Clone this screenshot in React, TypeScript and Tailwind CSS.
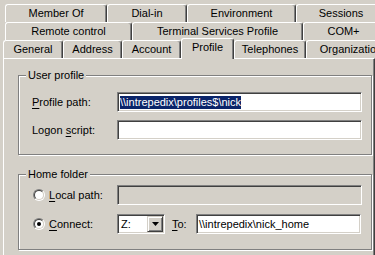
import React from 'react';

type TabDef = { label: string; w: string; selected?: boolean };

const row1: TabDef[] = [
  { label: 'Member Of', w: 'w-[102px]' },
  { label: 'Dial-in', w: 'w-[80px]' },
  { label: 'Environment', w: 'w-[109px]' },
  { label: 'Sessions', w: 'w-[90px]' },
];

const row2: TabDef[] = [
  { label: 'Remote control', w: 'w-[127px]' },
  { label: 'Terminal Services Profile', w: 'w-[171px]' },
  { label: 'COM+', w: 'w-[81px]' },
];

const row3: TabDef[] = [
  { label: 'General', w: 'w-[60px]' },
  { label: 'Address', w: 'w-[59px]' },
  { label: 'Account', w: 'w-[59px]' },
  { label: 'Profile', w: 'w-[53px]', selected: true },
  { label: 'Telephones', w: 'w-[72px]' },
  { label: 'Organization', w: 'w-[90px]' },
];

// classic raised tab: white top/left, dark + gray on the right
const Tab: React.FC<{ tab: TabDef }> = ({ tab }) => (
  <div
    className={`${tab.w} shrink-0 flex items-center justify-center whitespace-nowrap border-l border-t border-white border-r border-r-[#404040] rounded-t-[3px] shadow-[inset_-1px_0_0_#808080] ${
      tab.selected ? 'relative z-10 h-[21px] -mt-[2px] pb-[3px] bg-[#d4d0c8]' : 'h-[18px]'
    }`}
  >
    {tab.label}
  </div>
);

const TabRow: React.FC<{ tabs: TabDef[]; className: string }> = ({ tabs, className }) => (
  <div className={`flex h-[18px] ${className}`}>
    {tabs.map(t => (
      <Tab key={t.label} tab={t} />
    ))}
  </div>
);

// etched group box with caption sitting on the top line
const GroupBox: React.FC<{ title: string; className: string; children: React.ReactNode }> = ({ title, className, children }) => (
  <div className={`relative w-[354px] border border-[#808080] shadow-[1px_1px_0_#fff,inset_1px_1px_0_#fff] ${className}`}>
    <span className="absolute left-[7px] -top-[8px] px-[2px] bg-[#d4d0c8] leading-[14px]">{title}</span>
    {children}
  </div>
);

// sunken edit box
const Edit: React.FC<{ className: string; disabled?: boolean; children?: React.ReactNode }> = ({ className, disabled, children }) => (
  <div
    className={`h-[20px] flex items-center pl-[2px] border border-t-[#808080] border-l-[#808080] border-b-white border-r-white shadow-[inset_1px_1px_0_#404040,inset_-1px_-1px_0_#d4d0c8] ${
      disabled ? 'bg-[#d4d0c8]' : 'bg-white'
    } ${className}`}
  >
    {children}
  </div>
);

const Radio: React.FC<{ checked?: boolean }> = ({ checked }) => (
  <div className="w-[12px] h-[12px] shrink-0 rounded-full border border-t-[#808080] border-l-[#808080] border-b-white border-r-white">
    <div className="w-full h-full rounded-full border border-t-[#404040] border-l-[#404040] border-b-[#d4d0c8] border-r-[#d4d0c8] bg-white flex items-center justify-center">
      {checked && <div className="w-[4px] h-[4px] rounded-full bg-black" />}
    </div>
  </div>
);

const Key: React.FC<{ children: React.ReactNode }> = ({ children }) => (
  <span className="underline underline-offset-[2px]">{children}</span>
);

export default function App() {
  return (
    <div className="w-[375px] h-[255px] overflow-hidden bg-[#d4d0c8] pt-[4px] text-black text-[11px] leading-none font-['Liberation_Sans',Arial,sans-serif]">
      {/* tab strip, back rows first */}
      <TabRow tabs={row1} className="pl-[5px]" />
      <TabRow tabs={row2} className="pl-[5px]" />
      <TabRow tabs={row3} className="pl-[3px]" />

      {/* Profile page */}
      <div className="ml-[3px] w-[372px] h-[197px] border-l border-t border-white border-r border-r-[#404040] shadow-[inset_-1px_0_0_#808080] pl-[14px] pt-[16px]">
        <GroupBox title="User profile" className="h-[80px]">
          <div className="flex flex-col gap-[8px] pt-[16px] pl-[13px]">
            <div className="flex items-center">
              <span className="w-[85px]">
                <Key>P</Key>rofile path:
              </span>
              <Edit className="w-[245px]">
                <span className="bg-[#0a246a] text-white leading-[13px]">{'\\\\intrepedix\\profiles$\\nick'}</span>
              </Edit>
            </div>
            <div className="flex items-center">
              <span className="w-[85px]">
                Logon <Key>s</Key>cript:
              </span>
              <Edit className="w-[245px]" />
            </div>
          </div>
        </GroupBox>

        <GroupBox title="Home folder" className="h-[76px] mt-[19px]">
          <div className="flex flex-col gap-[9px] pt-[10px] pl-[14px]">
            <div className="flex items-center">
              <Radio />
              <span className="w-[72px] pl-[4px]">
                <Key>L</Key>ocal path:
              </span>
              <Edit className="w-[245px]" disabled />
            </div>
            <div className="flex items-center">
              <Radio checked />
              <span className="w-[72px] pl-[4px]">
                <Key>C</Key>onnect:
              </span>
              {/* drive combo */}
              <div className="w-[48px] h-[20px] flex items-center bg-white border border-t-[#808080] border-l-[#808080] border-b-white border-r-white shadow-[inset_1px_1px_0_#404040,inset_-1px_-1px_0_#d4d0c8] p-[1px]">
                <span className="flex-1 pl-[2px]">Z:</span>
                <div className="w-[16px] h-full flex items-center justify-center bg-[#d4d0c8] border border-t-[#d4d0c8] border-l-[#d4d0c8] border-b-[#404040] border-r-[#404040] shadow-[inset_1px_1px_0_#fff,inset_-1px_-1px_0_#808080]">
                  <svg width="7" height="4" viewBox="0 0 7 4">
                    <path d="M0 0h7L3.5 4z" fill="#000" />
                  </svg>
                </div>
              </div>
              <span className="ml-[7px] w-[24px]">
                <Key>T</Key>o:
              </span>
              <Edit className="w-[165px]">{'\\\\intrepedix\\nick_home'}</Edit>
            </div>
          </div>
        </GroupBox>
      </div>
    </div>
  );
}
